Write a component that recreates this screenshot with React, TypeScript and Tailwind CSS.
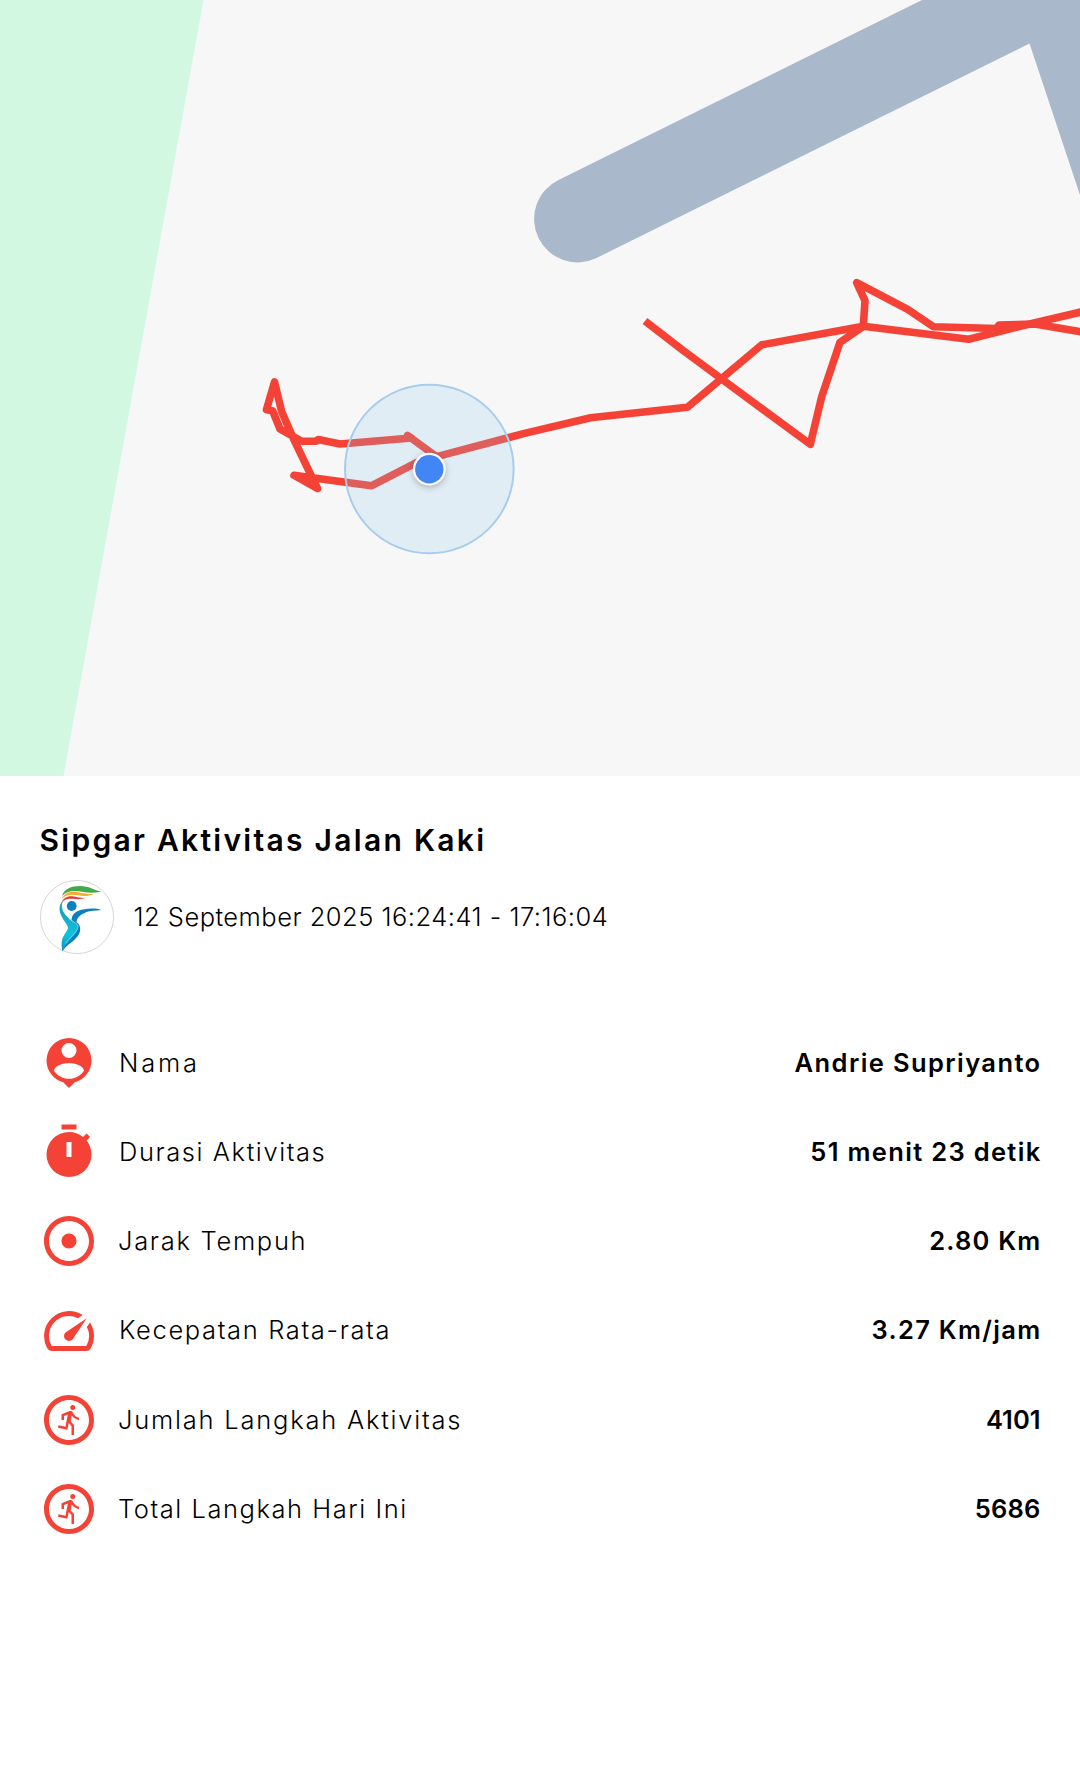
import { ReactNode } from "react";
import { MdAdjust, MdOutlineRunCircle, MdSpeed } from "react-icons/md";

interface RowProps {
  icon: ReactNode;
  label: string;
  value: string;
  labelClass: string;
  valueClass: string;
}

function PersonPinIcon() {
  return (
    <svg viewBox="0 0 24 24" width="1em" height="1em" fill="currentColor">
      <path d="M12 2a9 9 0 0 0-9 9c0 4.17 2.84 7.67 6.69 8.69L12 22l2.31-2.31C18.16 18.67 21 15.17 21 11a9 9 0 0 0-9-9zm0 2a3 3 0 1 1 0 6 3 3 0 0 1 0-6zm0 14.3c-2.5 0-4.71-1.28-6-3.22.03-2 4-3.08 6-3.08s5.97 1.08 6 3.08c-1.29 1.94-3.5 3.22-6 3.22z" />
    </svg>
  );
}

function TimerIcon() {
  return (
    <svg viewBox="0 0 24 24" width="1em" height="1em" fill="currentColor" fillRule="evenodd">
      <path d="M15 1H9v2h6V1zm-4 13h2V8h-2v6zm8.03-6.61l1.42-1.42c-.43-.51-.9-.99-1.41-1.41l-1.42 1.42A8.962 8.962 0 0 0 12 4a9 9 0 1 0 9 9c0-2.12-.74-4.07-1.97-5.61z" />
    </svg>
  );
}

function Logo() {
  return (
    <svg viewBox="0 0 74 74" className="size-[74px] shrink-0">
      <defs>
        <linearGradient id="body" x1="0" y1="0" x2="0" y2="1">
          <stop offset="0" stopColor="#1bb3b5" />
          <stop offset="0.25" stopColor="#12a4c6" />
          <stop offset="0.65" stopColor="#0fc4dc" />
          <stop offset="1" stopColor="#0b8fc4" />
        </linearGradient>
      </defs>
      <circle cx="37" cy="37" r="36.6" fill="#fff" stroke="#c4c4c4" strokeWidth="0.7" />
      <path d="M22 16C24 9 31 6 40 6C49 6 54 10 61.5 11.8C54 13 48 13 42 11.8C34 10 26 11 22 16Z" fill="#46a84b" />
      <path d="M21.5 19.5C24 13 30 10.8 38 12.2C44 13.5 49 14.2 53.5 14C48 16.8 43 16.2 38 15.3C31 14 25 15 21.5 19.5Z" fill="#f2ae2e" />
      <path d="M21.3 23.5C23 18 28 15.5 34 16.6C38 17.5 42 18.2 45.5 17.8C41 19.7 37 19.3 33 18.8C28 18.4 24 19 21.3 23.5Z" fill="#e53a35" />
      <path d="M22.8 20.8C20.5 28 23 33 28.5 38C33 42 38.5 44.5 38.8 47C37 55 26 60 22.3 71.5C21.5 66 21.3 62 22.3 59C24 54 28.5 50 28 47C26 42 20.5 37.5 19.6 30C19.2 26 20.5 23 22.8 20.8Z" fill="url(#body)" />
      <circle cx="31.7" cy="26" r="4.9" fill="#0b82bd" />
      <path d="M31.5 39.5C32 34 36 30.5 43 29.4C50 28.2 56 27.8 61.3 30C55 31 50 30.5 46 32.2C41 34.5 37 37 36.5 42C40.5 45 41.5 50 38.5 55C35 61 27 64 22.3 71.5C24 62 38 54 38.3 46.5C37 43 33 42 31.5 39.5Z" fill="#0b7fbf" />
      <path d="M29 39C34 42.5 39 43.5 38 48C36 53 29 58 25.5 63.5" fill="none" stroke="#c6e9f5" strokeWidth="0.5" />
    </svg>
  );
}

function TrackMap() {
  return (
    <div className="h-[776px] w-full overflow-hidden bg-[#f7f7f7]">
      <svg viewBox="0 0 1080 776" className="block size-full">
        <path d="M0 0H203.5L63.5 776H0Z" fill="#d2f8e2" />
        <path
          d="M922 0L558.5 180A43.2 43.2 0 0 0 596.5 258L1029.5 43.5L1080 195V0Z"
          fill="#a9b8ca"
        />
        <g fill="none" stroke="#f44336" strokeWidth="7.6" strokeLinejoin="round">
          <path d="M1082 311.8L1035 322.7L968.7 339.3L863.3 326.3L761.7 344.8L687.3 407.3L590.6 417.7L523.5 433.6L436.7 456.7L411 438L407.5 435.5L411.5 438L340 444L318.3 439.5L316 441.3L301.7 441.3L280 429L272.7 411L266.5 409.5L274.5 382L281.7 411.7L293.3 438.3L311.7 476.7L317.5 488.5L294 475.3L371.3 485.8L415 463.3L430 457" />
          <path d="M1082 332L1035 324L999 325L997 328.5L933.3 326.7L907.7 309.3L856.7 282.7L865 300.7L863.3 326.3L840 342.3L821.7 396.7L810.3 444.3L683.5 350.8L645 321" />
        </g>
        <circle cx="429.3" cy="469" r="84.3" fill="rgba(138,201,238,0.2)" stroke="#a8cdec" strokeWidth="2" />
        <circle cx="429.3" cy="469.2" r="16.4" fill="#fff" className="drop-shadow-[0_2px_3px_rgba(0,0,0,0.25)]" />
        <circle cx="429.3" cy="469.2" r="14.2" fill="#4285f4" />
      </svg>
    </div>
  );
}

function Row({ icon, label, value, labelClass, valueClass }: RowProps) {
  return (
    <div className="flex h-[89.3px] items-center">
      <div className="text-[60px] text-[#f44336]">{icon}</div>
      <span className={`font-light ${labelClass}`}>{label}</span>
      <span className={`ml-auto font-semibold ${valueClass}`}>{value}</span>
    </div>
  );
}

const rows: RowProps[] = [
  {
    icon: <PersonPinIcon />,
    label: "Nama",
    value: "Andrie Supriyanto",
    labelClass: "ml-5 tracking-[2.8px]",
    valueClass: "tracking-[1.4px]",
  },
  {
    icon: <TimerIcon />,
    label: "Durasi Aktivitas",
    value: "51 menit 23 detik",
    labelClass: "ml-5 tracking-[1.58px]",
    valueClass: "tracking-[1.32px]",
  },
  {
    icon: <MdAdjust />,
    label: "Jarak Tempuh",
    value: "2.80 Km",
    labelClass: "ml-[19px] tracking-[1.7px]",
    valueClass: "tracking-[1.2px]",
  },
  {
    icon: <MdSpeed />,
    label: "Kecepatan Rata-rata",
    value: "3.27 Km/jam",
    labelClass: "ml-5 tracking-[1.63px]",
    valueClass: "tracking-[1.3px]",
  },
  {
    icon: <MdOutlineRunCircle />,
    label: "Jumlah Langkah Aktivitas",
    value: "4101",
    labelClass: "ml-[19px] tracking-[1.78px]",
    valueClass: "mr-px tracking-normal",
  },
  {
    icon: <MdOutlineRunCircle />,
    label: "Total Langkah Hari Ini",
    value: "5686",
    labelClass: "ml-[19px] tracking-[1.55px]",
    valueClass: "mr-px tracking-[0.2px]",
  },
];

export default function App() {
  return (
    <div className="min-h-[1785px] w-[1080px] bg-white font-['Inter','Liberation_Sans',sans-serif] text-[25.5px] text-black">
      <TrackMap />
      <div className="pt-[46px] pr-[38.5px] pl-[39.5px]">
        <h1 className="text-[30px] leading-9 font-semibold tracking-[2.28px]">
          Sipgar Aktivitas Jalan Kaki
        </h1>
        <div className="mt-[22px] flex items-center gap-5">
          <Logo />
          <span className="font-light tracking-[0.48px]">12 September 2025 16:24:41 - 17:16:04</span>
        </div>
        <div className="-ml-[0.5px] mt-16">
          {rows.map((row) => (
            <Row key={row.label} {...row} />
          ))}
        </div>
      </div>
    </div>
  );
}
